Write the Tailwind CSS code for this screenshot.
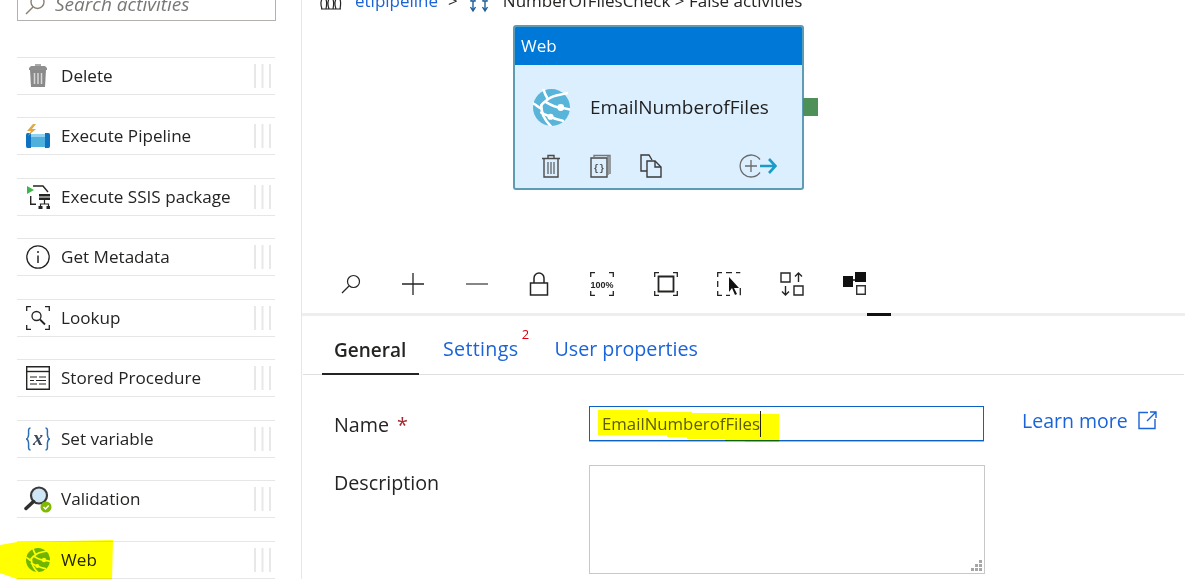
<!DOCTYPE html>
<html lang="en">
<head>
    <meta charset="UTF-8">
    <title>Pipeline editor - Web activity</title>
    <script src="https://cdn.jsdelivr.net/npm/@tailwindcss/browser@4"></script>
</head>
<body class="bg-white overflow-hidden">
<svg width="0" height="0" class="absolute">
    <symbol id="globe" viewBox="0 0 36 36">
        <circle cx="18" cy="18" r="18" fill="currentColor"/>
        <g fill="none" stroke="#fff" stroke-width="2.500" stroke-linecap="round">
            <path d="M10 0 C11 3 12 6 14 9"/>
            <path d="M33 4 C26 6 20 6 16 9 C13 11 10 13 8 16"/>
            <path d="M0 14 C3 15 5 18 8 19"/>
            <path d="M8 16 C8 20 9 23 10 26 C12 30 15 34 18 37"/>
            <path d="M13 13 C18 16 22 18 27 18 L36 20"/>
            <path d="M8 23 C12 25 14 26 17 27 C21 29 24 30 29 31"/>
        </g>
        <circle cx="27" cy="18" r="3.300" fill="#fff"/>
        <circle cx="17" cy="27" r="3" fill="#fff"/>
    </symbol>
    <symbol id="grip" viewBox="0 0 18 24">
        <path d="M1 0v24M8.500 0v24M16 0v24" stroke="#e8e8e8" stroke-width="2" fill="none"/>
    </symbol>
</svg>

<div class="flex h-[579px] w-[1185px] overflow-hidden text-[#252423] font-['Open_Sans','Liberation_Sans',sans-serif]">

    <!-- Activities -->
    <aside class="w-[302px] h-full shrink-0 border-r border-[#e6e6e6] pl-[17px] pr-[26px]">
        <div class="h-[21px] border border-t-0 border-[#b3b0ad] flex items-end pl-[6px] gap-[9px] -mr-[1px]">
            <svg class="w-[22px] h-[22px] mb-[2px] shrink-0" viewBox="0 0 22 22" fill="none" stroke="#8a7f74" stroke-width="1.400"><circle cx="13.500" cy="6" r="6.500"/><path d="M9 11 2 18"/></svg>
            <span class="text-[19px] leading-[26px] mb-[3px] italic text-[#7a7875] whitespace-nowrap">Search activities</span>
        </div>

        <div class="mt-[35.75px] flex flex-col gap-[22.5px] text-[17.1px]">
            <!-- Delete -->
            <div class="h-[38px] border-y border-[#e6e6e6] flex items-center relative">
                <span class="w-[42px] mr-[2px] flex justify-center">
                    <svg class="w-[20px] h-[24px]" viewBox="0 0 20 24"><path d="M3 2h14l2 2v2H1V4z" fill="#8f8f8f"/><path d="M2 6h16l-1 17H3z" fill="#8a8a8a"/><path d="M6.500 9v11M10 9v11M13.500 9v11" stroke="#d8d8d8" stroke-width="1.500"/><path d="M7 0h6v2H7z" fill="#aaa"/></svg>
                </span>
                <span>Delete</span>
                <svg class="absolute right-[3px] top-[6px] w-[18px] h-[24px]"><use href="#grip"/></svg>
            </div>
            <!-- Execute Pipeline -->
            <div class="h-[38px] border-y border-[#e6e6e6] flex items-center relative">
                <span class="w-[42px] mr-[2px] flex justify-center">
                    <svg class="w-[24px] h-[24px]" viewBox="0 0 24 24"><path d="M5 9H1.500Q0 9 0 11v11q0 2 1.500 2H5z" fill="#0f72c0"/><path d="M19 9h3.500q1.500 0 1.500 2v11q0 2-1.500 2H19z" fill="#0f72c0"/><path d="M5 10h14v13H5z" fill="#4fb0dc"/><path d="M5 10h14v3H5z" fill="#8fd3ee"/><path d="M7 0 1 7h4l-3 5 8-7H6l4-5z" fill="#e3a83f"/></svg>
                </span>
                <span>Execute Pipeline</span>
                <svg class="absolute right-[3px] top-[6px] w-[18px] h-[24px]"><use href="#grip"/></svg>
            </div>
            <!-- Execute SSIS package -->
            <div class="h-[38px] border-y border-[#e6e6e6] flex items-center relative">
                <span class="w-[42px] mr-[2px] flex justify-center">
                    <svg class="w-[24px] h-[24px]" viewBox="0 0 24 24"><path d="M7 1h10l5 6M4.700 11v8.300H10" fill="none" stroke="#252423" stroke-width="1.400"/><path d="M1 1 8 5 1 9z" fill="#3fb54a"/><path d="M13 9h11v2.500H13zM13 12.500h11V15H13z" fill="#252423"/><path d="M18.500 15v4M14.500 22v-3h8v3" fill="none" stroke="#252423" stroke-width="1.200"/><path d="M12.500 21h4v3h-4zM20.500 21h3.500v3h-3.500z" fill="#252423"/></svg>
                </span>
                <span>Execute SSIS package</span>
                <svg class="absolute right-[3px] top-[6px] w-[18px] h-[24px]"><use href="#grip"/></svg>
            </div>
            <!-- Get Metadata -->
            <div class="h-[38px] border-y border-[#e6e6e6] flex items-center relative">
                <span class="w-[42px] mr-[2px] flex justify-center">
                    <svg class="w-[24px] h-[24px]" viewBox="0 0 24 24" fill="none"><circle cx="12" cy="12" r="11.200" stroke="#252423" stroke-width="1.300"/><path d="M12 10.500V18" stroke="#252423" stroke-width="1.500"/><circle cx="12" cy="7" r="1" fill="#252423"/></svg>
                </span>
                <span>Get Metadata</span>
                <svg class="absolute right-[3px] top-[6px] w-[18px] h-[24px]"><use href="#grip"/></svg>
            </div>
            <!-- Lookup -->
            <div class="h-[38px] border-y border-[#e6e6e6] flex items-center relative">
                <span class="w-[42px] mr-[2px] flex justify-center">
                    <svg class="w-[24px] h-[24px]" viewBox="0 0 24 24" fill="none" stroke="#252423" stroke-width="1.300"><path d="M.700 5V.700H5M19 .700h4.300V5M.700 19v4.300H5M19 23.300h4.300V19"/><circle cx="10.500" cy="10" r="4.500"/><path d="m14 13.500 5 5" stroke-width="1.800"/></svg>
                </span>
                <span>Lookup</span>
                <svg class="absolute right-[3px] top-[6px] w-[18px] h-[24px]"><use href="#grip"/></svg>
            </div>
            <!-- Stored Procedure -->
            <div class="h-[38px] border-y border-[#e6e6e6] flex items-center relative">
                <span class="w-[42px] mr-[2px] flex justify-center">
                    <svg class="w-[24px] h-[24px]" viewBox="0 0 24 24" fill="none" stroke="#252423"><path d="M.700.700h22.600v22.600H.700z" stroke-width="1.400"/><path d="M1 5.500h22" stroke-width="1.400"/><path d="M4 11h7M13 11h7M4 14.500h4M10 14.500h10M4 18h7M13 18h7" stroke-width="1.200"/></svg>
                </span>
                <span>Stored Procedure</span>
                <svg class="absolute right-[3px] top-[6px] w-[18px] h-[24px]"><use href="#grip"/></svg>
            </div>
            <!-- Set variable -->
            <div class="h-[38px] border-y border-[#e6e6e6] flex items-center relative">
                <span class="w-[42px] mr-[2px] flex justify-center">
                    <svg class="w-[26px] h-[24px]" viewBox="0 0 26 24" fill="none" stroke="#2a6fb5" stroke-width="1.500"><path d="M5.500 1C2.500 1 4 5 3.500 8.500 3.200 10.500 2.500 12 1 12c1.500 0 2.200 1.500 2.500 3.500C4 19 2.500 23 5.500 23"/><path d="M20.500 1c3 0 1.500 4 2 7.500.3 2 1 3.500 2.500 3.500-1.500 0-2.200 1.500-2.500 3.500-.5 3.500 1 7.500-2 7.500"/><text x="13" y="17.500" text-anchor="middle" font-size="20" font-style="italic" font-weight="700" fill="#3a4a5c" stroke="none" font-family="Liberation Serif">x</text></svg>
                </span>
                <span>Set variable</span>
                <svg class="absolute right-[3px] top-[6px] w-[18px] h-[24px]"><use href="#grip"/></svg>
            </div>
            <!-- Validation -->
            <div class="h-[38px] border-y border-[#e6e6e6] flex items-center relative">
                <span class="w-[42px] mr-[2px] flex justify-center">
                    <svg class="w-[28px] h-[27px]" viewBox="0 0 28 27"><circle cx="15" cy="9.500" r="8" fill="#cfe6f5" stroke="#3a3a3a" stroke-width="2.200"/><path d="M9.500 15.500 2 22.500" stroke="#2f2f2f" stroke-width="3.500" stroke-linecap="round"/><circle cx="22" cy="21" r="5.500" fill="#7fba00"/><path d="m19.500 21 2 2 3.200-3.500" fill="none" stroke="#fff" stroke-width="1.500"/></svg>
                </span>
                <span>Validation</span>
                <svg class="absolute right-[3px] top-[6px] w-[18px] h-[24px]"><use href="#grip"/></svg>
            </div>
            <!-- Web -->
            <div class="h-[38px] border-y border-[#e6e6e6] flex items-center relative">
                <span class="w-[42px] mr-[2px] flex justify-center text-[#6fb52c]">
                    <svg class="w-[24px] h-[24px]"><use href="#globe"/></svg>
                </span>
                <span>Web</span>
                <svg class="absolute right-[3px] top-[6px] w-[18px] h-[24px]"><use href="#grip"/></svg>
            </div>
        </div>
    </aside>

    <!-- Designer -->
    <main class="flex-1 flex flex-col min-w-0">
        <!-- Canvas -->
        <section class="relative h-[261px] shrink-0">
            <div class="absolute left-[17px] -top-[12px] flex items-center text-[17px] leading-[24px] whitespace-nowrap">
                <svg class="w-[24px] h-[20px] mr-[12px]" viewBox="0 0 24 20" fill="none" stroke="#252423" stroke-width="1.200"><path d="M3 18c-2-5-1-11 2-11s3 6 2 11M10 18c-2-5-1-11 2-11s3 6 2 11M17 18c-2-5-1-11 2-11s3 6 2 11M2 18h20"/></svg>
                <span class="text-[#1a63d8]">etlpipeline</span>
                <span class="ml-[10px]">&gt;</span>
                <svg class="w-[22px] h-[22px] ml-[10px] mr-[13px] mt-[3px]" viewBox="0 0 22 22" fill="none" stroke="#1d5f99" stroke-width="1.400"><path d="M3 2h4v8H3zM15 2h4v8h-4zM5 10v9M17 10v9M2.500 16 5 20l2.500-4M14.500 16l2.500 4 2.500-4"/></svg>
                <span>NumberOfFilesCheck &gt; False activities</span>
            </div>

            <!-- Activity node -->
            <div class="absolute left-[211px] top-[25px] w-[291px] h-[165px] rounded-[3px] border-2 border-[#5d9cb5] bg-[#dcefff] overflow-hidden flex flex-col">
                <div class="h-[38px] bg-[#0078d7] text-white text-[17px] pl-[6px] flex items-center shrink-0">Web</div>
                <div class="flex items-center h-[85px] pl-[18px] gap-[20px] shrink-0">
                    <svg class="w-[37px] h-[37px] text-[#59b4d9]"><use href="#globe"/></svg>
                    <span class="text-[19px] text-[#1f1f1f]">EmailNumberofFiles</span>
                </div>
                <div class="flex items-center pl-[26px] h-[26px] mt-[3px]">
                    <svg class="w-[20px] h-[24px]" viewBox="0 0 20 24" fill="none" stroke="#4a4a4a" stroke-width="1.400"><path d="M1 4.500h18M7 4V1.500h6V4M3 4.500V23h14V4.500"/><path d="M7 8v12M10 8v12M13 8v12" stroke-width="1.100"/></svg>
                    <svg class="w-[22px] h-[24px] ml-[29px]" viewBox="0 0 22 24" fill="none" stroke="#4a4a4a" stroke-width="1.400"><path d="M1 4h16v19H1z"/><path d="M4 4V1.500h16V20M18 1v20" stroke="#777"/><text x="9" y="17" text-anchor="middle" font-size="9" font-weight="700" fill="#4a4a4a" stroke="none" font-family="Liberation Mono">{}</text></svg>
                    <svg class="w-[22px] h-[24px] ml-[28px]" viewBox="0 0 22 24" fill="none" stroke="#3a3a3a" stroke-width="1.400"><path d="M7 17H1V1h8l3 5"/><path d="M7 7h8l6 6v10H7z"/><path d="M15 7v6h6"/></svg>
                    <svg class="w-[38px] h-[24px] ml-[77px]" viewBox="0 0 38 24" fill="none"><path d="M21 5.500A11 11 0 1 0 21 18.500" stroke="#6b6b6b" stroke-width="1.300"/><path d="M6 12h12M12 6v12" stroke="#6b6b6b" stroke-width="1.300"/><path d="M21 12h15M30 5l6.500 7-6.500 7" stroke="#1b9bc8" stroke-width="2.600"/></svg>
                </div>
            </div>
            <div class="absolute left-[501px] top-[98px] w-[15px] h-[18px] bg-[#4d9158]"></div>
        </section>

        <!-- Toolbar -->
        <div class="h-[55px] shrink-0 flex items-start pt-[11px] pl-[38px] gap-[39px] relative border-b-[3px] border-[#eeeeee]">
            <svg class="w-[22px] h-[24px] shrink-0" viewBox="0 0 22 24" fill="none" stroke="#252423" stroke-width="1.200"><circle cx="13.500" cy="9.500" r="6"/><path d="M9 14 2 21"/></svg>
            <svg class="w-[24px] h-[24px] shrink-0" viewBox="0 0 24 24" fill="none" stroke="#252423" stroke-width="1.300"><path d="M1 12h22M12 1v22"/></svg>
            <svg class="w-[24px] h-[24px] ml-[1px] shrink-0" viewBox="0 0 24 24" fill="none" stroke="#252423" stroke-width="1.100"><path d="M1 12h22"/></svg>
            <svg class="w-[22px] h-[24px] shrink-0" viewBox="0 0 22 24" fill="none" stroke="#252423" stroke-width="1.500"><path d="M2.500 11h17v12h-17z"/><path d="M6 11V6a5 5 0 0 1 10 0v5"/></svg>
            <svg class="w-[24px] h-[24px] ml-[1px] shrink-0" viewBox="0 0 24 24" fill="none" stroke="#252423" stroke-width="1.300"><path d="M.700 5V.700H5M19 .700h4.300V5M.700 19v4.300H5M19 23.300h4.300V19"/><text x="12" y="15.500" text-anchor="middle" font-size="9" font-weight="700" fill="#252423" stroke="none" font-family="Liberation Sans">100%</text></svg>
            <svg class="w-[24px] h-[24px] ml-[1px] shrink-0" viewBox="0 0 24 24" fill="none" stroke="#252423" stroke-width="1.300"><path d="M.700 5V.700H5M19 .700h4.300V5M.700 19v4.300H5M19 23.300h4.300V19"/><path d="M4.500 4.500h15v15h-15z" stroke-width="1.800"/></svg>
            <svg class="w-[24px] h-[24px] shrink-0" viewBox="0 0 24 24" fill="none" stroke="#252423" stroke-width="1.300"><path d="M.700 5V.700H5M9 .700h6M19 .700h4.300M.700 9v6M.700 19v4.300H5M9 23.300h4M23.300 16v7.300"/><path d="M12 5v15l3-4 3 7 2-1-3-6h5z" fill="#111" stroke="none"/></svg>
            <svg class="w-[24px] h-[24px] shrink-0" viewBox="0 0 24 24" fill="none" stroke="#252423" stroke-width="1.400"><path d="M1 1h9v9H1zM14 14h9v9h-9z"/><path d="M18.500 10V1M15 4.500l3.500-3.500 3.500 3.500M5.500 14v9M2 19.500 5.500 23 9 19.500"/></svg>
            <svg class="w-[24px] h-[24px] shrink-0" viewBox="0 0 24 24" fill="none"><path d="M-1 4h11v11H-1zM12 0h11v10H12z" fill="#111"/><path d="M10 8h3" stroke="#111" stroke-width="1.500"/><path d="M13.700 13.700h8.600v8.600h-8.600z" stroke="#333" stroke-width="1.400"/></svg>
            <div class="absolute left-[565px] -bottom-[3px] w-[24px] h-[3px] bg-[#111]"></div>
        </div>

        <!-- Properties tabs -->
        <div class="h-[59px] shrink-0 mx-[1px] pl-[19px] border-b border-[#e1dfdd] flex items-end text-[19.700px] leading-[26px]">
            <div class="w-[97px] h-[56px] pl-[12px] pt-[18px] text-[19px] font-semibold text-[#252423] border-b-2 border-[#252423] -mb-[1px]">General</div>
            <div class="h-[56px] pt-[18px] ml-[24px] text-[#1a63d8] relative tracking-[0.3px]">Settings
                <span class="absolute -right-[11px] top-[9px] text-[13px] leading-[15px] text-[#d90012]">2</span>
            </div>
            <div class="h-[56px] pt-[18px] ml-[36px] text-[#1a63d8] whitespace-nowrap">User properties</div>
        </div>

        <!-- General form -->
        <div class="flex-1 pl-[32px] pt-[31px] text-[19.700px] text-[#252423]">
            <div class="flex items-start h-[59px]">
                <label class="w-[255px] shrink-0 h-[35px] flex items-center gap-[8px] pt-[2px]">Name <span class="text-[#a4262c]">*</span></label>
                <div class="w-[395px] shrink-0 h-[35px] border border-[#0b62c4] shadow-[0_1px_0_#b9b9b9] flex items-center pl-[12px] text-[16.800px] text-[#5c5c5c]">
                    <span class="border-r border-[#222] leading-[26px]">EmailNumberofFiles</span>
                </div>
                <a class="ml-[38px] flex items-center gap-[10px] text-[19.500px] text-[#1a63d8] -mt-[3px] h-[35px] whitespace-nowrap">Learn more
                    <svg class="w-[19px] h-[19px]" viewBox="0 0 19 19" fill="none" stroke="#1a63d8" stroke-width="1.400"><path d="M10 1.500H1v16h16V8M12 1h6v6M18 1 9 10"/></svg>
                </a>
            </div>
            <div class="flex items-start">
                <label class="w-[255px] shrink-0 pt-[3px]">Description</label>
                <div class="relative w-[396px] shrink-0 h-[109px] border border-[#c8c8c8]">
                    <svg class="absolute right-[1px] bottom-[1px] w-[12px] h-[12px]" viewBox="0 0 12 12" fill="#a6a6a6"><path d="M8 0h3v3H8zM8 4h3v3H8zM4 4h3v3H4zM8 8h3v3H8zM4 8h3v3H4zM0 8h3v3H0z"/></svg>
                </div>
            </div>
        </div>
    </main>
</div>

<!-- Yellow marker annotations drawn on the screenshot -->
<svg class="absolute left-0 top-0 w-[1185px] h-[579px] mix-blend-multiply pointer-events-none" viewBox="0 0 1185 579">
    <path d="M0 545 17 542 113 540 112 579 17 579 0 573z" fill="#ffff00"/>
    <path d="M598 410H648V412H692V413H730V414H779V442H745V441H725V439H687V437H667V435H598z" fill="#ffff00"/>
</svg>
</body>
</html>
